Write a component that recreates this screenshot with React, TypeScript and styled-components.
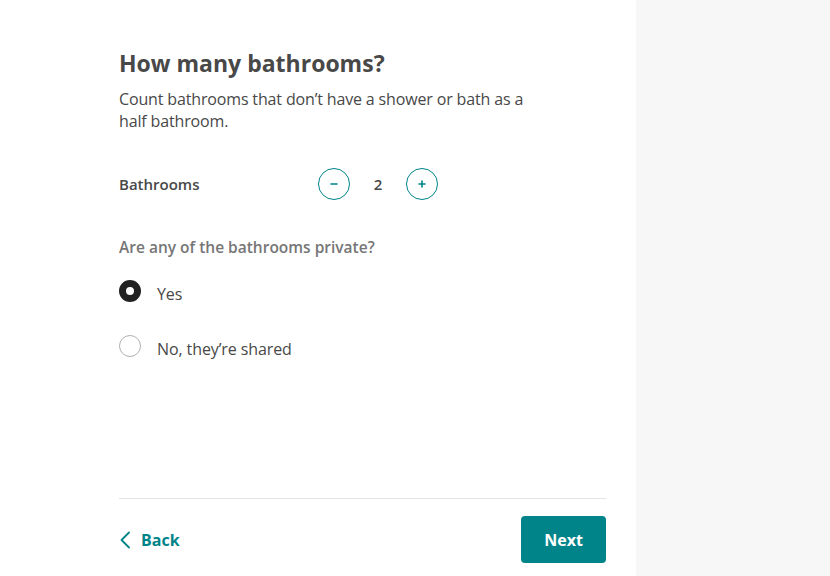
import React, { useState } from 'react';
import styled, { createGlobalStyle } from 'styled-components';

const GlobalStyle = createGlobalStyle`
  html, body {
    margin: 0;
    padding: 0;
    background: #ffffff;
  }
  body {
    font-family: "Open Sans", "Noto Sans", sans-serif;
    color: #484848;
  }
`;

const Page = styled.div`
  display: flex;
  width: 100%;
  height: 576px;
`;

const Main = styled.div`
  width: 636px;
  flex-shrink: 0;
  display: flex;
  flex-direction: column;
  padding: 0 30px 0 119px;
  box-sizing: border-box;
`;

const Aside = styled.div`
  flex: 1;
  background: #f7f7f7;
`;

const Content = styled.div`
  flex: 1;
  width: 487px;
  padding-top: 47px;
`;

const Title = styled.h1`
  margin: 0;
  font-size: 23px;
  line-height: 32px;
  font-weight: 700;
  color: #484848;
`;

const Subtitle = styled.p`
  margin: 9px 0 0;
  width: 410px;
  font-size: 16px;
  line-height: 22px;
  letter-spacing: -0.15px;
  color: #484848;
`;

const CounterRow = styled.div`
  display: flex;
  align-items: center;
  margin-top: 36px;
`;

const CounterLabel = styled.div`
  width: 199px;
  font-size: 15px;
  font-weight: 600;
  color: #484848;
`;

const RoundButton = styled.button`
  width: 32px;
  height: 32px;
  border-radius: 50%;
  border: 1px solid #008489;
  background: #fff;
  color: #008489;
  display: flex;
  align-items: center;
  justify-content: center;
  padding: 0;
  cursor: pointer;
`;

const Count = styled.div`
  width: 56px;
  text-align: center;
  font-size: 15px;
  font-weight: 600;
  color: #484848;
`;

const Question = styled.div`
  margin-top: 36px;
  font-size: 15.5px;
  font-weight: 600;
  color: #767676;
`;

const Options = styled.div`
  display: flex;
  flex-direction: column;
  gap: 30px;
  margin-top: 22px;
`;

const Option = styled.label`
  display: flex;
  align-items: flex-start;
  gap: 16px;
  cursor: pointer;
  font-size: 16px;
  line-height: 22px;
  letter-spacing: -0.1px;
  color: #484848;
`;

const OptionText = styled.span`
  margin-top: 3px;
`;

const Radio = styled.span<{ $checked: boolean }>`
  width: 22px;
  height: 22px;
  border-radius: 50%;
  box-sizing: border-box;
  background: #fff;
  border: ${(p) => (p.$checked ? '7px solid #222' : '1px solid #b0b0b0')};
`;

const Footer = styled.div`
  width: 487px;
  border-top: 1px solid #e4e4e4;
  display: flex;
  align-items: center;
  justify-content: space-between;
  padding: 17px 0 13px;
`;

const BackLink = styled.button`
  display: flex;
  align-items: center;
  gap: 10px;
  border: none;
  background: none;
  padding: 0;
  color: #008489;
  font-family: inherit;
  font-size: 16px;
  font-weight: 700;
  cursor: pointer;
`;

const NextButton = styled.button`
  width: 85px;
  height: 47px;
  border: none;
  border-radius: 4px;
  background: #008489;
  color: #fff;
  font-family: inherit;
  font-size: 16px;
  font-weight: 700;
  cursor: pointer;
`;

const MinusIcon = () => (
  <svg width="10" height="10" viewBox="0 0 10 10">
    <path d="M2 5h6" stroke="currentColor" strokeWidth="1.6" strokeLinecap="round" />
  </svg>
);

const PlusIcon = () => (
  <svg width="10" height="10" viewBox="0 0 10 10">
    <path d="M2 5h6M5 2v6" stroke="currentColor" strokeWidth="1.6" strokeLinecap="round" />
  </svg>
);

const ChevronLeft = () => (
  <svg width="12" height="18" viewBox="0 0 12 18">
    <path d="M10 1.5L2.5 9l7.5 7.5" fill="none" stroke="currentColor" strokeWidth="1.8" strokeLinecap="round" strokeLinejoin="round" />
  </svg>
);

export default function App() {
  const [count, setCount] = useState(2);
  const [priv, setPriv] = useState(true);

  return (
    <>
      <GlobalStyle />
      <Page>
        <Main>
          <Content>
            <Title>How many bathrooms?</Title>
            <Subtitle>Count bathrooms that don’t have a shower or bath as a half bathroom.</Subtitle>
            <CounterRow>
              <CounterLabel>Bathrooms</CounterLabel>
              <RoundButton onClick={() => setCount((c) => Math.max(0, c - 1))}>
                <MinusIcon />
              </RoundButton>
              <Count>{count}</Count>
              <RoundButton onClick={() => setCount((c) => c + 1)}>
                <PlusIcon />
              </RoundButton>
            </CounterRow>
            <Question>Are any of the bathrooms private?</Question>
            <Options>
              <Option onClick={() => setPriv(true)}>
                <Radio $checked={priv} />
                <OptionText>Yes</OptionText>
              </Option>
              <Option onClick={() => setPriv(false)}>
                <Radio $checked={!priv} />
                <OptionText>No, they’re shared</OptionText>
              </Option>
            </Options>
          </Content>
          <Footer>
            <BackLink>
              <ChevronLeft />
              Back
            </BackLink>
            <NextButton>Next</NextButton>
          </Footer>
        </Main>
        <Aside />
      </Page>
    </>
  );
}
